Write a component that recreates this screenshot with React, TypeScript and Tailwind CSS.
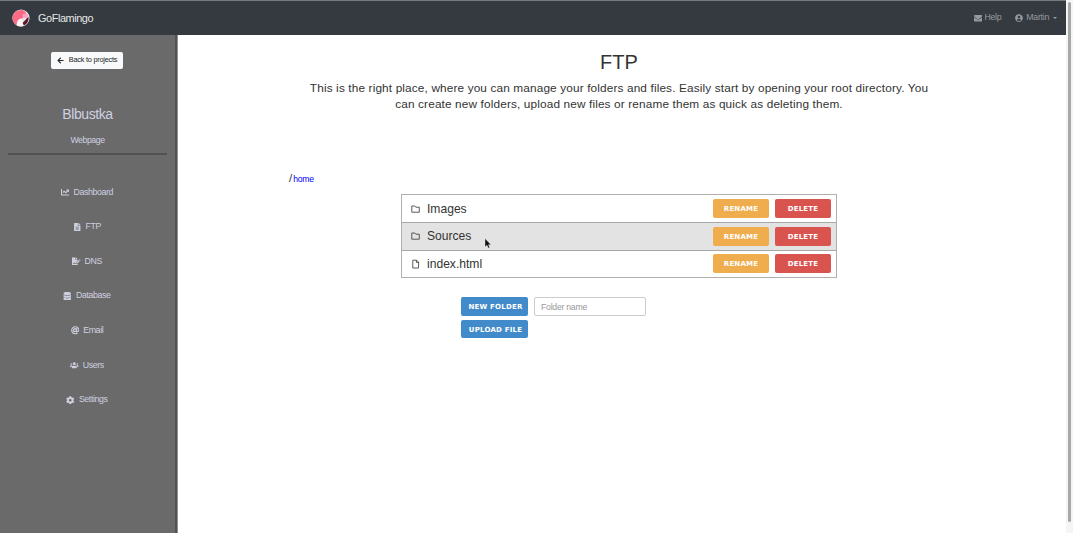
import type { ReactNode } from "react";
import {
  FaArrowLeft, FaAt, FaChartLine, FaCog, FaDatabase, FaEnvelope,
  FaFileAlt, FaFileSignature, FaUserCircle, FaUsers,
} from "react-icons/fa";

const nav: { icon: ReactNode; label: string }[] = [
  { icon: <FaChartLine />, label: "Dashboard" },
  { icon: <FaFileAlt />, label: "FTP" },
  { icon: <FaFileSignature />, label: "DNS" },
  { icon: <FaDatabase />, label: "Database" },
  { icon: <FaAt />, label: "Email" },
  { icon: <FaUsers />, label: "Users" },
  { icon: <FaCog />, label: "Settings" },
];

const files = [
  { name: "Images", folder: true, active: false },
  { name: "Sources", folder: true, active: true },
  { name: "index.html", folder: false, active: false },
];

function Logo() {
  return (
    <svg width="18" height="18" viewBox="0 0 18 18">
      <clipPath id="disc"><circle cx="9" cy="9" r="8.6" /></clipPath>
      <g clipPath="url(#disc)">
        <rect width="18" height="18" fill="#e9e4e8" />
        <path d="M0 18V10C1 4 5 1 9 1C12 1 14 3 14.5 5L11 9L9 10L6 11L4 18Z" fill="#fb6a82" />
        <path d="M10.5 5.5C12 4 16 4 16 7C15 9.5 12 9 10.5 8.5Z" fill="#ff9cc0" />
        <path d="M16.5 8C17 12 15 15 12 16.5L10.5 14C12 12 14 11 15 9Z" fill="#5c1a26" />
        <path d="M4.5 18C4.5 13 6 10 9.5 9.5C10.5 11 10.8 14 10.8 18Z" fill="#fdf4f6" />
      </g>
    </svg>
  );
}

function FileIcon({ folder }: { folder: boolean }) {
  return (
    <svg width="10" height="10" viewBox="0 0 10 10" fill="none" stroke="#484848" strokeWidth="0.9" strokeLinejoin="round">
      {folder ? <path d="M0.8 8.2V2H3.8L4.8 3.2H8.3V8.2Z" /> : <path d="M1.8 1.2H5.6L7.6 3.2V9H1.8ZM5.4 1.2V3.4H7.6" />}
    </svg>
  );
}

function ActionButton({ color, children }: { color: string; children: ReactNode }) {
  return (
    <button className={`${color} flex h-[18.5px] w-[56px] items-center justify-center rounded-[2px] pt-px font-['DejaVu_Sans'] text-[7px] font-bold leading-[10px] tracking-[0.2px] text-white`}>
      {children}
    </button>
  );
}

export default function App() {
  return (
    <div className="flex h-[533px] w-[1073px] overflow-hidden bg-white font-['Liberation_Sans',sans-serif] text-[#333]">
      <div className="flex w-[1066px] flex-col">
        <header className="flex h-[35px] shrink-0 items-center border-t border-[#737b7c] bg-[#343a40] pl-3 pr-[9px]">
          <Logo />
          <span className="ml-2 text-[10.9px] tracking-[-0.43px] text-[#e6e7e8]">GoFlamingo</span>
          <div className="ml-auto flex items-center text-[8.8px] tracking-[-0.3px] text-[#97999c]">
            <FaEnvelope className="mr-[2px] size-[8.5px]" />
            <span>Help</span>
            <FaUserCircle className="ml-[14px] mr-[3px] size-2" />
            <span>Martin</span>
            <span className="ml-[4px] border-x-2 border-t-2 border-x-transparent border-t-[#97999c]" />
          </div>
        </header>
        <div className="flex min-h-0 flex-1">
          <aside className="flex w-[178px] shrink-0 border-r border-[#929292] bg-[#6a6a6a] text-[#ced0e0]">
            <div className="flex w-[175px] flex-col items-center px-2 pt-[17px]">
              <button className="mr-px flex h-[17px] w-[72px] items-center justify-center rounded-[2px] bg-[#f8f9fa] text-[7.3px] tracking-[-0.22px] text-[#212529]">
                <FaArrowLeft className="mr-[5px] size-[7px]" />
                Back to projects
              </button>
              <h2 className="mt-[36px] text-[14px] leading-[18px] tracking-[-0.4px]">Blbustka</h2>
              <p className="mt-[11px] text-[8.7px] leading-[12px] tracking-[-0.4px]">Webpage</p>
              <div className="mt-[7px] h-[2px] w-[159px] bg-[#515151]" />
              <nav className="mr-px mt-[20px] flex flex-col items-center">
                {nav.map((n) => (
                  <a key={n.label} className="flex h-[34.6px] items-center gap-1 text-[8.8px] tracking-[-0.38px] [&>svg]:h-[8.5px] [&>svg]:w-auto">
                    {n.icon}
                    <span>{n.label}</span>
                  </a>
                ))}
              </nav>
            </div>
            <div className="w-[2px] bg-[#525252]" />
          </aside>
          <main className="flex-1">
            <h1 className="ml-[-6px] mt-[15px] text-center text-[20px] leading-[24px]">FTP</h1>
            <p className="ml-[121px] mt-[6px] w-[640px] text-center text-[11.8px] leading-[16px] tracking-[0.14px]">
              This is the right place, where you can manage your folders and files. Easily start by opening your root directory. You
              <br />
              can create new folders, upload new files or rename them as quick as deleting them.
            </p>
            <div className="ml-[111px] mt-[60px] flex h-[14px] items-center text-[11.5px]">
              /<a className="ml-px text-[8.6px] tracking-[-0.25px] text-[#0000ff]">home</a>
            </div>
            <div className="ml-[223px] mt-[8px] w-[436px] border border-[#b0b0b0]">
              {files.map((f, i) => (
                <div key={f.name} className={`relative flex h-[27.3px] items-center pl-[9px] pr-[5px] text-[12.1px] ${f.active ? "bg-[#e3e3e3]" : "bg-white"} ${i ? "border-t border-[#a8a8a8]" : ""}`}>
                  <FileIcon folder={f.folder} />
                  <span className="ml-[6px]">{f.name}</span>
                  <div className="ml-auto flex gap-[6px]">
                    <ActionButton color="bg-[#f0ad4e]">RENAME</ActionButton>
                    <ActionButton color="bg-[#d9534f]">DELETE</ActionButton>
                  </div>
                  {f.active && (
                    <svg className="absolute left-[82px] top-[14.5px]" width="8" height="11" viewBox="0 0 8 11">
                      <path d="M1 0.5V9L3 7.2L4.3 10L5.7 9.4L4.5 6.7H7Z" fill="#111" stroke="#eee" strokeWidth="0.4" />
                    </svg>
                  )}
                </div>
              ))}
            </div>
            <div className="ml-[283px] mt-[19.5px] flex items-center gap-[6px]">
              <button className="h-[19px] w-[67px] rounded-[2px] bg-[#428bca] pl-[2px] pt-px font-['DejaVu_Sans'] text-[7px] font-bold leading-[10px] tracking-[0.2px] text-white">NEW FOLDER</button>
              <input placeholder="Folder name" className="h-[19px] w-[112px] rounded-[2px] border border-[#ccc] px-[6px] text-[8.7px] tracking-[-0.25px] placeholder:text-[#999]" />
            </div>
            <button className="ml-[283px] mt-[4px] block h-[18px] w-[67px] rounded-[2px] bg-[#428bca] pl-[2px] pt-px font-['DejaVu_Sans'] text-[7px] font-bold leading-[10px] tracking-[0.2px] text-white">UPLOAD FILE</button>
          </main>
        </div>
      </div>
      <div className="w-[7px] bg-[#f5f5f5] pl-[2px] pt-[2px]">
        <div className="h-[520px] w-[3px] rounded-full bg-[#a8a8a8]" />
      </div>
    </div>
  );
}
